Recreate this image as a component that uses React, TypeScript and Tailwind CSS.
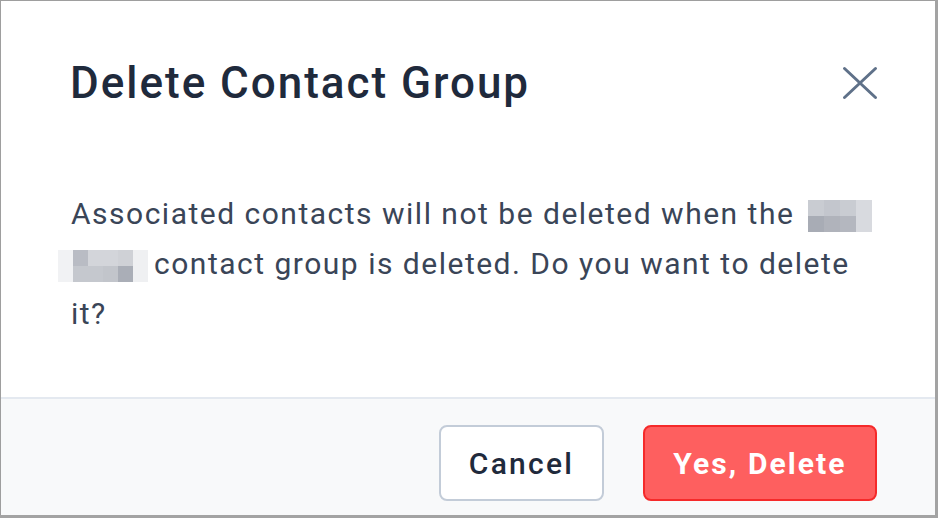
const blurTop = ["#c9ccd2", "#c3c6cd", "#c9ccd2", "#d8dadf"];
const blurBottom = ["#a8acb5", "#b0b3bb", "#b4b7bf", "#d8dadf"];

const blur2Top = ["#f1f2f4", "#b9bcc4", "#d3d5da", "#d3d5da", "#cfd1d6", "#eff0f2"];
const blur2Bottom = ["#f1f2f4", "#c5c8ce", "#c5c8ce", "#c2c5cb", "#aaaeb7", "#eff0f2"];

function Pixels({ top, bottom, w }: { top: string[]; bottom: string[]; w: number }) {
  return (
    <span className="inline-flex flex-col align-middle">
      <span className="flex">
        {top.map((c, i) => (
          <span key={i} className="h-4" style={{ background: c, width: w }} />
        ))}
      </span>
      <span className="flex">
        {bottom.map((c, i) => (
          <span key={i} className="h-4" style={{ background: c, width: w }} />
        ))}
      </span>
    </span>
  );
}

export default function App() {
  return (
    <div className="h-[518px] w-[938px] overflow-hidden bg-[#a3a3a3] font-['Roboto',sans-serif]">
      <div className="flex h-[515px] w-[935px] flex-col border-l border-t border-[#9e9e9e] bg-white">
        <div className="flex items-start justify-between pl-[69px] pr-[57px] pt-[56px]">
          <h1 className="text-[44px] font-medium leading-[52px] tracking-[0.045em] text-[#1f2a3c]">
            Delete Contact Group
          </h1>
          <button type="button" className="mt-[9px] text-[#5f7189]" aria-label="Close">
            <svg width="36" height="34" viewBox="0 0 36 34" fill="none">
              <path
                d="M2.5 2.5L33.5 31.5M33.5 2.5L2.5 31.5"
                stroke="currentColor"
                strokeWidth="3"
                strokeLinecap="round"
              />
            </svg>
          </button>
        </div>

        <div className="pl-[70px] pt-[80px] text-[30px] leading-[50px] tracking-[0.05em] text-[#3a4557]">
          <div className="flex items-center whitespace-nowrap">
            Associated contacts will not be deleted when the
            <span className="ml-[14px]">
              <Pixels top={blurTop} bottom={blurBottom} w={16} />
            </span>
          </div>
          <div className="-ml-[13px] flex items-center whitespace-nowrap">
            <span className="mr-[6px]">
              <Pixels top={blur2Top} bottom={blur2Bottom} w={15} />
            </span>
            contact group is deleted. Do you want to delete
          </div>
          <div>it?</div>
        </div>

        <div className="mt-auto flex h-[118px] items-start justify-end gap-[39px] border-t-2 border-[#e4e9f0] bg-[#f8f9fa] pr-[58px] pt-[26px]">
          <button
            type="button"
            className="h-[76px] w-[165px] rounded-[8px] border-2 border-[#c3ccd8] bg-white text-[30px] font-medium tracking-[0.075em] text-[#1f2a3c]"
          >
            Cancel
          </button>
          <button
            type="button"
            className="h-[76px] w-[234px] rounded-[8px] border-2 border-[#f52a2a] bg-[#fe5f5f] text-[30px] font-bold tracking-[0.07em] text-white"
          >
            Yes, Delete
          </button>
        </div>
      </div>
    </div>
  );
}
